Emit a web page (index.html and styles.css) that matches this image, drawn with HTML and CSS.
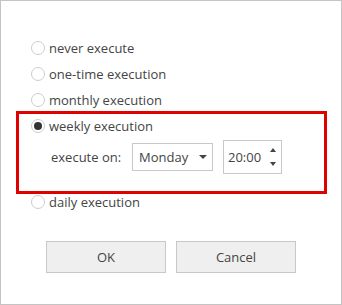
FILE: index.html
```html
<!DOCTYPE html>
<html>
<head>
<meta charset="utf-8">
<link rel="stylesheet" href="styles.css">
</head>
<body>
<div class="dialog">
  <div class="options">
    <div class="row"><span class="radio"></span><span class="label">never execute</span></div>
    <div class="row"><span class="radio"></span><span class="label">one-time execution</span></div>
    <div class="row"><span class="radio"></span><span class="label">monthly execution</span></div>
    <div class="group">
      <div class="row"><span class="radio checked"></span><span class="label">weekly execution</span></div>
      <div class="exec-row">
        <span class="exec-label">execute on:</span>
        <div class="select"><span>Monday</span><span class="caret"></span></div>
        <div class="time"><span>20:00</span>
          <div class="spin"><span class="up"></span><span class="down"></span></div>
        </div>
      </div>
    </div>
    <div class="row"><span class="radio"></span><span class="label">daily execution</span></div>
  </div>
  <div class="buttons">
    <div class="btn">OK</div>
    <div class="btn">Cancel</div>
  </div>
</div>
</body>
</html>
```
FILE: styles.css
```css
html, body {
  margin: 0;
  padding: 0;
  background: #fff;
}
.dialog {
  width: 342px;
  height: 305px;
  box-sizing: border-box;
  border: 1px solid #c4c4c4;
  background: #fff;
  font-family: "Open Sans", "Noto Sans", sans-serif;
  font-size: 13px;
  color: #444;
  padding-top: 34px;
}
.options {
  display: flex;
  flex-direction: column;
}
.row {
  height: 26px;
  display: flex;
  align-items: center;
  padding-left: 30px;
}
.radio {
  width: 14px;
  height: 14px;
  box-sizing: border-box;
  border: 1px solid #cdcdcd;
  border-radius: 50%;
  background: #fff;
  margin-right: 4px;
  display: flex;
  align-items: center;
  justify-content: center;
}
.radio.checked::after {
  content: "";
  width: 8px;
  height: 8px;
  border-radius: 50%;
  background: #333;
}
.label {
  line-height: 16px;
}
.group {
  position: relative;
  padding-bottom: 15px;
}
.group::before {
  content: "";
  position: absolute;
  top: -2px;
  bottom: -5px;
  left: 15px;
  right: 14px;
  border: 3px solid #e00000;
}
.exec-row {
  display: flex;
  align-items: center;
  height: 34px;
  margin-top: 1px;
  padding-left: 50px;
}
.exec-label {
  width: 81px;
}
.select {
  width: 81px;
  height: 28px;
  box-sizing: border-box;
  border: 1px solid #c8c8c8;
  display: flex;
  align-items: center;
  justify-content: space-between;
  padding: 0 5px 0 6px;
  margin-right: 10px;
}
.caret {
  width: 0;
  height: 0;
  border-left: 4px solid transparent;
  border-right: 4px solid transparent;
  border-top: 4px solid #444;
}
.time {
  width: 59px;
  height: 34px;
  box-sizing: border-box;
  border: 1px solid #c8c8c8;
  display: flex;
  align-items: center;
  justify-content: space-between;
  padding: 0 5px 0 4px;
}
.spin {
  display: flex;
  flex-direction: column;
  align-items: center;
  gap: 10px;
}
.up {
  width: 0;
  height: 0;
  border-left: 3px solid transparent;
  border-right: 3px solid transparent;
  border-bottom: 4px solid #444;
}
.down {
  width: 0;
  height: 0;
  border-left: 3px solid transparent;
  border-right: 3px solid transparent;
  border-top: 4px solid #444;
}
.buttons {
  display: flex;
  gap: 10px;
  padding-left: 45px;
  margin-top: 26px;
}
.btn {
  width: 120px;
  height: 32px;
  box-sizing: border-box;
  border: 1px solid #c8c8c8;
  background: #efefef;
  display: flex;
  align-items: center;
  justify-content: center;
}
```
